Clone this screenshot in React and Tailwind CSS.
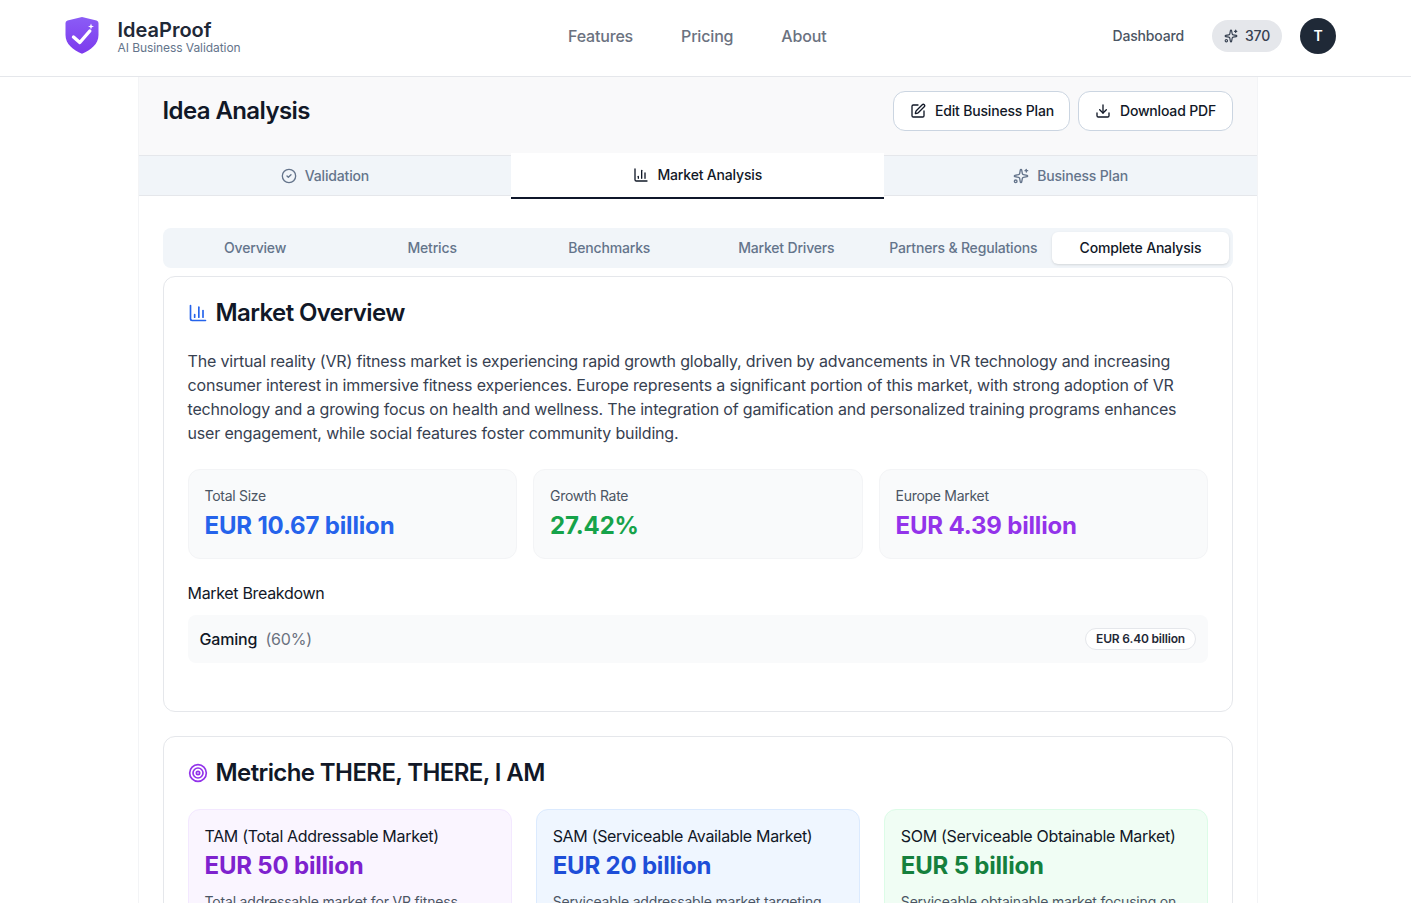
import React from 'react';
import { BarChart3, CircleCheck, Download, SquarePen, Sparkles, Target } from 'lucide-react';

const subTabs = ['Overview', 'Metrics', 'Benchmarks', 'Market Drivers', 'Partners & Regulations', 'Complete Analysis'];

const stats = [
  { label: 'Total Size', value: 'EUR 10.67 billion', color: 'text-[#2563eb]' },
  { label: 'Growth Rate', value: '27.42%', color: 'text-[#16a34a]' },
  { label: 'Europe Market', value: 'EUR 4.39 billion', color: 'text-[#9333ea]' },
];

const metrics = [
  {
    title: 'TAM (Total Addressable Market)',
    value: 'EUR 50 billion',
    text: 'Total addressable market for VR fitness',
    box: 'bg-[#faf5ff] border-[#f3e8ff]',
    color: 'text-[#7e22ce]',
  },
  {
    title: 'SAM (Serviceable Available Market)',
    value: 'EUR 20 billion',
    text: 'Serviceable addressable market targeting',
    box: 'bg-[#eff6ff] border-[#dbeafe]',
    color: 'text-[#1d4ed8]',
  },
  {
    title: 'SOM (Serviceable Obtainable Market)',
    value: 'EUR 5 billion',
    text: 'Serviceable obtainable market focusing on',
    box: 'bg-[#f0fdf4] border-[#dcfce7]',
    color: 'text-[#15803d]',
  },
];

function Logo() {
  return (
    <svg width="36" height="38" viewBox="0 0 36 38" className="shrink-0">
      <defs>
        <linearGradient id="shield" x1="0" y1="0" x2="0" y2="1">
          <stop offset="0" stopColor="#8b5cf6" />
          <stop offset="1" stopColor="#7c3aed" />
        </linearGradient>
      </defs>
      <path d="M17 0.200 Q18 -0.100 19 0.200 L32.500 3.600 Q34.500 4.200 34.500 6 V18 C34.500 27 27 33 18 36.800 C9 33 1.500 27 1.500 18 V6 Q1.500 4.200 3.500 3.600 Z" fill="url(#shield)" />
      <path d="M9.500 20 L15.800 25.500 L25.800 14" fill="none" stroke="#fff" strokeWidth="3.400" strokeLinecap="round" strokeLinejoin="round" />
      <path d="M27 6.500 L27.800 8.700 L30 9.500 L27.800 10.300 L27 12.500 L26.200 10.300 L24 9.500 L26.200 8.700 Z" fill="#fff" />
    </svg>
  );
}

export default function App() {
  return (
    <div className="h-[903px] overflow-hidden bg-white font-['Inter',sans-serif] tracking-[-0.011em] text-[#111827]">
      <header className="h-[77px] bg-white border-b border-[#e5e7eb] relative z-10">
        <div className="w-[1396px] h-[72px] flex items-center pl-[64px] pr-[60px]">
          <div className="flex items-center gap-[17.500px] w-[504px]">
            <Logo />
            <div>
              <div className="text-xl font-semibold leading-[24px] tracking-normal text-[#1f2937] mt-[-1px]">IdeaProof</div>
              <div className="text-xs leading-[12px] tracking-[-0.006em] text-[#64748b]">AI Business Validation</div>
            </div>
          </div>
          <nav className="flex items-center gap-12 text-base text-[#6b7280] font-medium">
            <span>Features</span>
            <span>Pricing</span>
            <span>About</span>
          </nav>
          <div className="ml-auto flex items-center">
            <span className="text-sm font-medium text-[#4b5563]">Dashboard</span>
            <div className="ml-7 h-8 px-3 rounded-full bg-[#e5e7eb] flex items-center gap-[7px] text-sm font-medium text-[#374151]">
              <Sparkles size={14} />
              370
            </div>
            <div className="ml-[18px] w-9 h-9 rounded-full bg-[#1f2937] text-white flex items-center justify-center text-sm font-semibold">T</div>
          </div>
        </div>
      </header>

      <main className="ml-[137.500px] w-[1120.500px] border-x border-[#f3f4f6]">
        <div className="h-[78px] bg-[#f9f9fa] flex items-center justify-between px-6 pb-[11px]">
          <h1 className="text-2xl font-semibold text-[#111827] tracking-tight">Idea Analysis</h1>
          <div className="flex gap-2">
            <button className="h-10 pl-4 pr-[15px] rounded-xl bg-white border border-[#cbd5e1] flex items-center gap-[9px] text-sm font-medium text-[#111827]">
              <SquarePen size={16} />
              Edit Business Plan
            </button>
            <button className="h-10 px-4 rounded-xl bg-white border border-[#cbd5e1] flex items-center gap-[9px] text-sm font-medium text-[#111827]">
              <Download size={16} />
              Download PDF
            </button>
          </div>
        </div>

        <div className="grid grid-cols-3 h-[41px] bg-[#f1f5f9] border-y border-[#e5e7eb] text-sm font-medium text-[#64748b]">
          <div className="flex items-center justify-center gap-2">
            <CircleCheck size={16} />
            Validation
          </div>
          <div className="relative">
            <div className="absolute left-0 right-0 top-[-3px] h-[46px] bg-white border-b-2 border-[#0f172a] flex items-center justify-center gap-2 text-[#111827]">
              <BarChart3 size={16} />
              Market Analysis
            </div>
          </div>
          <div className="flex items-center justify-center gap-2">
            <Sparkles size={16} />
            Business Plan
          </div>
        </div>

        <div className="px-6 pt-8">
          <div className="grid grid-cols-6 h-10 p-1 rounded-lg bg-[#f1f5f9] text-sm font-medium text-[#64748b]">
            {subTabs.map((tab, i) => (
              <div
                key={tab}
                className={
                  i === 5
                    ? 'flex items-center justify-center rounded-md bg-white text-[#111827] shadow-sm'
                    : 'flex items-center justify-center'
                }
              >
                {tab}
              </div>
            ))}
          </div>

          <section className="mt-2 h-[436px] rounded-xl border border-[#e5e7eb] bg-white p-6">
            <h2 className="flex items-center gap-2 text-2xl font-semibold tracking-tight text-[#111827] h-6">
              <BarChart3 size={20} className="text-[#2563eb]" />
              Market Overview
            </h2>
            <p className="mt-6 text-base leading-6 text-[#374151]">
              The virtual reality (VR) fitness market is experiencing rapid growth globally, driven by advancements in VR technology and increasing consumer interest in immersive fitness experiences. Europe represents a significant portion of this market, with strong adoption of VR technology and a growing focus on health and wellness. The integration of gamification and personalized training programs enhances user engagement, while social features foster community building.
            </p>
            <div className="mt-6 grid grid-cols-3 gap-4">
              {stats.map((s) => (
                <div key={s.label} className="h-[90px] rounded-xl border border-[#f3f4f6] bg-[#f9fafb] px-4 pt-4">
                  <div className="text-sm leading-5 tracking-[-0.02em] text-[#4b5563]">{s.label}</div>
                  <div className={`text-2xl font-bold leading-9 tracking-[-0.007em] pt-[2px] ${s.color}`}>{s.value}</div>
                </div>
              ))}
            </div>
            <div className="mt-[22px] text-base leading-6 tracking-[-0.02em] text-[#111827]">Market Breakdown</div>
            <div className="mt-[10px] h-12 rounded-lg bg-[#f9fafb] px-3 flex items-center justify-between">
              <div className="text-base font-medium text-[#111827]">
                Gaming <span className="ml-1 font-normal text-[#6b7280]">(60%)</span>
              </div>
              <span className="rounded-full border border-[#e5e7eb] bg-white px-[10px] py-[2px] text-xs font-semibold text-[#1f2937]">EUR 6.40 billion</span>
            </div>
          </section>

          <section className="mt-6 rounded-xl border border-[#e5e7eb] bg-white p-6">
            <h2 className="flex items-center gap-2 text-2xl font-semibold tracking-tight text-[#111827] h-6">
              <Target size={20} className="text-[#9333ea]" />
              Metriche THERE, THERE, I AM
            </h2>
            <div className="mt-6 grid grid-cols-3 gap-6">
              {metrics.map((m) => (
                <div key={m.title} className={`rounded-xl border px-4 pt-[14px] pb-4 ${m.box}`}>
                  <div className="text-base leading-6 tracking-[-0.02em] text-[#111827]">{m.title}</div>
                  <div className={`text-2xl font-bold leading-9 tracking-[-0.008em] ${m.color}`}>{m.value}</div>
                  <p className="mt-2 text-sm leading-5 text-[#4b5563]">{m.text}</p>
                </div>
              ))}
            </div>
          </section>
        </div>
      </main>
    </div>
  );
}
